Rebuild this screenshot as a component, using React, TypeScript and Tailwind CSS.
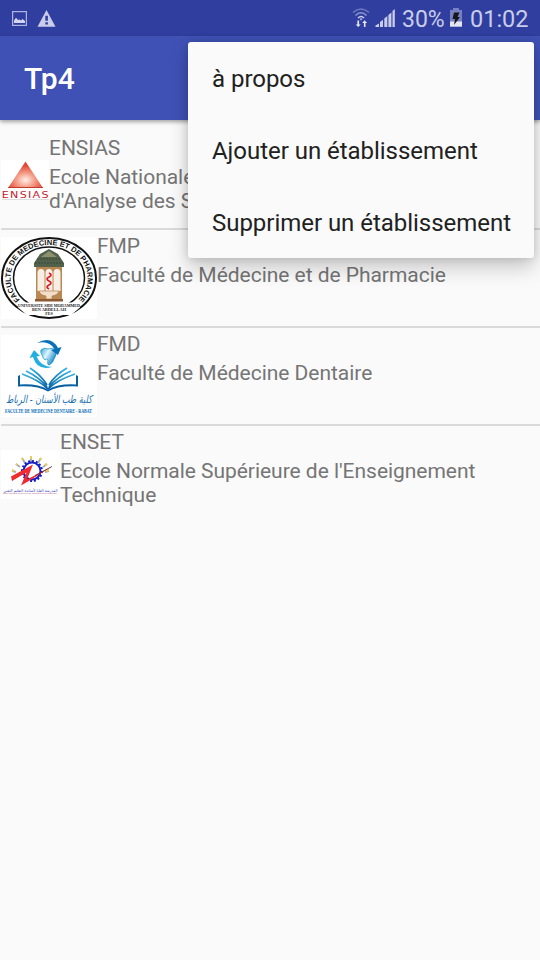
import type { ReactNode } from 'react';

function StatusBar() {
  return (
    <div className="flex h-9 items-center justify-between bg-[#303f9f] px-3 text-[#c9cdea]">
      <svg width="46" height="20" viewBox="0 0 46 20">
        <rect x="0.6" y="3.6" width="13.8" height="13.8" fill="none" stroke="#adb4dd" strokeWidth="1.2" />
        <path d="M2 15V12.500l2-2.700 2 2.200 1.500-.5 1.500 1 1.500-1.500 2.500 2V15z" fill="#d3d6ee" />
        <path fillRule="evenodd" d="M34.500 2 43.500 18.700H25.500ZM33.300 7.800h2.600v5h-2.600zM33.300 14.200h2.600v2.200h-2.600z" fill="#c9cdea" />
      </svg>
      <div className="flex h-9 items-center text-[23.500px] leading-9">
        <svg width="48" height="24" viewBox="0 0 48 24" className="mr-[3px]">
          <g fill="none" strokeWidth="1.600">
            <path d="M2 6.500Q10 -.5 18 6.500" stroke="#6f7abd" />
            <path d="M4.500 9.500Q10 4 15.500 9.500" stroke="#8d96cd" />
            <path d="M7 12Q10 9 13 12" stroke="#c9cdea" />
          </g>
          <path d="M8.500 12.500h3L10 14.500z" fill="#c9cdea" />
          <path d="M6.400 14.500h1.700v4h1.600L7.200 21l-2.500-2.500h1.700zM12.900 21h1.600v-4h1.600l-2.500-2.700-2.400 2.700h1.700z" fill="#e4e6f5" />
          <path d="M24.500 21v-1.500l3.500-2V21zM29 21v-5l3-2.200V21zM33.300 21v-8.500l3-2.500v11zM37.400 21V9l3-2.500V21zM41.500 21V5l2.300-2V21z" fill="#c9cdea" />
        </svg>
        <span className="mt-1 w-[44px] whitespace-nowrap text-[23px]">30%</span>
        <svg width="12" height="19" viewBox="0 0 12 19" className="mr-2 ml-1 -mt-0.5">
          <path d="M0 2h3V0h6v2h3v17H0z" fill="#7681c3" />
          <path d="M0 13.500h12v5H0z" fill="#e4e6f5" />
          <path d="M4 4.500h5.500L7.500 9h2.500L4 17l1-6H2.500z" fill="#171717" />
        </svg>
        <span className="mt-0.5 w-[58px] whitespace-nowrap">01:02</span>
      </div>
    </div>
  );
}

function EnsiasLogo() {
  return (
    <svg width="48" height="40" viewBox="0 0 48 40" className="shrink-0 overflow-visible bg-white">
      <defs>
        <radialGradient id="ensiasGlow" cx="0.5" cy="0.7" r="0.55">
          <stop offset="0" stopColor="#fff0e8" />
          <stop offset="0.5" stopColor="#f49a85" />
          <stop offset="1" stopColor="#e14835" />
        </radialGradient>
      </defs>
      <path d="M24.500 1.500 42 28H7z" fill="url(#ensiasGlow)" />
      <path d="M7 27.500h35" stroke="#c43a2b" />
      <text x="0.800" y="38" letterSpacing="0.900" textLength="48" lengthAdjust="spacingAndGlyphs" fontFamily="DejaVu Sans, sans-serif" fontSize="8" fill="#c2222e">ENSIAS</text>
      <path d="M1 39.500h47" stroke="#ddd" />
    </svg>
  );
}

function FmpLogo() {
  return (
    <svg width="96" height="82" viewBox="0 0 96 82" className="shrink-0 bg-white">
      <defs>
        <path id="fmpArc" d="M20.400 64A38.500 33 0 1 1 75.600 64" />
      </defs>
      <ellipse cx="48" cy="41" rx="47" ry="40" fill="#fff" stroke="#111" strokeWidth="2" />
      <ellipse cx="48" cy="41" rx="35.500" ry="31" fill="none" stroke="#111" strokeWidth="1.500" />
      <text fontFamily="Liberation Sans, sans-serif" fontSize="7.500" fontWeight="700" fill="#111">
        <textPath href="#fmpArc" startOffset="2">FACULTE DE MEDECINE ET DE PHARMACIE</textPath>
      </text>
      <path d="M35 28h26v36H35z" fill="#b98953" />
      <path d="M36.500 36q0-4 3.500-4t3.500 4v18h-7zM44.500 36q0-4 3.500-4t3.500 4v18h-7zM52.500 36q0-4 3.500-4t3.500 4v18h-7z" fill="#f8eee4" />
      <path d="M48 12 57 17 63 26v4H33v-4l6-9z" fill="#51614a" />
      <path d="M48 14 56 20H40z" fill="#8b906f" />
      <path d="M36 22h24M34 26h28" stroke="#38483a" strokeDasharray="2 1" />
      <path d="M48 36q4 2 0 4t0 4 0 4 0 4" fill="none" stroke="#d91e29" strokeWidth="1.700" />
      <path d="M38 54h20q-1 4-7 5v3h-6v-3q-6-1-7-5z" fill="#f2dfcb" stroke="#bd7c48" strokeWidth="0.700" />
      <path d="M34 62h28v2.500H34z" fill="#8d5932" />
      <path d="M17 65.500h62v5l-9 7.500H26l-9-7.500z" fill="#fff" />
      <g fontFamily="Liberation Serif, serif" fontSize="4.200" fontWeight="700" fill="#222" textAnchor="middle">
        <text x="48" y="70" textLength="62" lengthAdjust="spacingAndGlyphs">UNIVERSITE SIDI MOHAMMED</text>
        <text x="48" y="74.200" textLength="34" lengthAdjust="spacingAndGlyphs">BEN ABDELLAH</text>
        <text x="48" y="78.400">FES</text>
      </g>
    </svg>
  );
}

function FmdLogo() {
  return (
    <svg width="96" height="82" viewBox="0 0 96 82" className="shrink-0 bg-white">
      <defs>
        <linearGradient id="toothBlue" x1="0" y1="0" x2="1" y2="0.600">
          <stop offset="0" stopColor="#2fa9dd" />
          <stop offset="0.450" stopColor="#e1f6fd" />
          <stop offset="1" stopColor="#0a7fc4" />
        </linearGradient>
        <linearGradient id="pageBlue" x1="0" y1="0" x2="0" y2="1">
          <stop offset="0" stopColor="#35b3e3" />
          <stop offset="1" stopColor="#0863a8" />
        </linearGradient>
      </defs>
      <path d="M40 15q3-3 7-1 5-2 8 1 1 5-2 9-1 4-5 6-2 0-1-5-1-2-3 0-2-2-3-5-2-3-1-5z" fill="url(#toothBlue)" stroke="#078fc5" strokeWidth="0.700" />
      <path d="M36 8Q50 0 57 13l3.500-1-3.500 8-7-5 3.500-1Q48 5 36 8z" fill="#0871b8" />
      <path d="M51 32Q36 36 32 22l-3.500 1 4.500-8 6 6-3.500.5Q40 32 51 32z" fill="#20afe0" />
      <g fill="none" stroke="url(#pageBlue)" strokeWidth="1.800">
        <path d="M47 54Q38 45 21 39" />
        <path d="M47 54Q56 45 74 39" />
        <path d="M46 52Q38 42 25 36" />
        <path d="M48 52Q56 42 70 36" />
        <path d="M46 50Q40 40 29 33" />
        <path d="M48 50Q54 40 66 33" />
      </g>
      <path d="M17 41v10.500q20-1 30 5 10-6 30-5V41l-2-1v9.500q-18-1-28 5-10-6-28-5V40z" fill="#0860a3" />
      <text x="48" y="68" direction="rtl" textAnchor="middle" textLength="86" lengthAdjust="spacingAndGlyphs" fontFamily="DejaVu Sans, sans-serif" fontSize="11" fontStyle="italic" fill="#1971ae">كلية طب الأسنان - الرباط</text>
      <text x="4" y="78" textLength="87" lengthAdjust="spacingAndGlyphs" fontFamily="Liberation Serif, serif" fontSize="5.600" fontWeight="700" fill="#076cb5">FACULTE DE MEDECINE DENTAIRE - RABAT</text>
    </svg>
  );
}

function EnsetLogo() {
  return (
    <svg width="59" height="49" viewBox="0 0 59 49" className="shrink-0 bg-white">
      <g strokeWidth="2" fill="none">
        <path d="M30 12V6M24 13l-3-5M19 17l-4-3M37 13l3-5M42 17l4-3M15 22l-4-1M44 22l4-1" stroke="#a7adb0" />
        <path d="M30 9V6M22 10l-1-2M16 15l-1-1M39 10l1-2M44 15l2-1M13 21l-2-1M45 21l3-1" stroke="#e9ce51" />
      </g>
      <circle cx="31" cy="21" r="10" fill="none" stroke="#1820c5" strokeWidth="2" strokeDasharray="2 1.900" />
      <circle cx="31" cy="21" r="8.500" fill="none" stroke="#1820c5" strokeWidth="2" />
      <path d="M10 26.500 32 14.500 26 29.500 51 16.500 27 31.500 20 35.500 25.500 22.500 11 31z" fill="#ef2d30" />
      <path d="M34 25.500 51 16.500" stroke="#59242e" strokeWidth="0.800" />
      <text x="29.500" y="41.500" direction="rtl" textAnchor="middle" textLength="54" lengthAdjust="spacingAndGlyphs" fontFamily="DejaVu Sans, sans-serif" fontSize="4" fill="#343bbb">المدرسة العليا لأساتذة التعليم التقني</text>
      <text x="2" y="44" textLength="54" lengthAdjust="spacingAndGlyphs" fontFamily="Liberation Sans, sans-serif" fontSize="2" fill="#b95576">Ecole Normale Supérieure de l'Enseignement Technique</text>
    </svg>
  );
}

function SchoolRow({ logo, name, children }: { logo: ReactNode; name: string; children: ReactNode }) {
  return (
    <li className="flex h-24 items-center pl-px">
      {logo}
      <div className="flex h-full min-w-0 flex-1 flex-col gap-[5px] pt-1 text-[21px] leading-6 tracking-[-0.035px] text-[#757575]">
        <h2>{name}</h2>
        <p>{children}</p>
      </div>
    </li>
  );
}

function OverflowMenu() {
  return (
    <nav className="absolute top-[42px] right-1.5 w-[346px] rounded-[3px] bg-[#fafafa] text-[24px] tracking-[-0.035px] text-[#212121] shadow-[0_10px_20px_rgba(0,0,0,0.2),0_0_10px_rgba(0,0,0,0.14)]">
      {['à propos', 'Ajouter un établissement', 'Supprimer un établissement'].map((item) => (
        <div key={item} className="flex h-[72px] items-center px-6 pt-0.5 whitespace-nowrap">{item}</div>
      ))}
    </nav>
  );
}

export default function App() {
  return (
    <div className="relative h-[960px] w-[540px] overflow-hidden bg-[#fafafa] font-['Roboto',sans-serif]">
      <StatusBar />
      <header className="relative flex h-[84px] items-center bg-[#3f51b5] px-6 shadow-[0_2px_4px_rgba(0,0,0,0.35)]">
        <h1 className="pt-0.5 text-[30px] leading-9 font-medium text-white">Tp4</h1>
      </header>
      <ul className="flex flex-col pt-3">
        <SchoolRow logo={<EnsiasLogo />} name="ENSIAS">
          Ecole Nationale Supérieure d'Informatique et<br />d'Analyse des Systèmes
        </SchoolRow>
        <li className="ml-px h-0.5 bg-[#dadada]" />
        <SchoolRow logo={<FmpLogo />} name="FMP">Faculté de Médecine et de Pharmacie</SchoolRow>
        <li className="ml-px h-0.5 bg-[#dadada]" />
        <SchoolRow logo={<FmdLogo />} name="FMD">Faculté de Médecine Dentaire</SchoolRow>
        <li className="ml-px h-0.5 bg-[#dadada]" />
        <SchoolRow logo={<EnsetLogo />} name="ENSET">
          Ecole Normale Supérieure de l'Enseignement<br />Technique
        </SchoolRow>
      </ul>
      <OverflowMenu />
    </div>
  );
}
